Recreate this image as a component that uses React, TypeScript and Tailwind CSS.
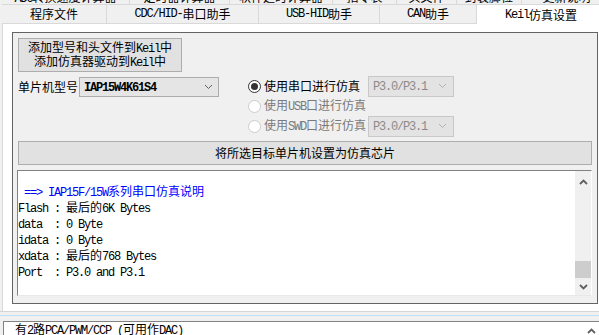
import React from "react";

function T({ s }: { s: string }) {
  const parts = s.split(/([\x20-\x7e]+)/).filter((p) => p.length > 0);
  return (
    <>
      {parts.map((p, i) =>
        /^[\x20-\x7e]+$/.test(p) ? (
          <span key={i} className="font-['Liberation_Mono',monospace] tracking-[-1.2px] whitespace-pre">
            {p}
          </span>
        ) : (
          <span key={i}>{p}</span>
        )
      )}
    </>
  );
}

function Chevron({ color = "#606060" }: { color?: string }) {
  return (
    <svg width="9" height="6" viewBox="0 0 9 6">
      <polyline points="1,1 4.5,4.5 8,1" fill="none" stroke={color} strokeWidth="1" />
    </svg>
  );
}

function ScrollArrow({ up }: { up?: boolean }) {
  return (
    <svg width="9" height="6" viewBox="0 0 9 6">
      <polyline
        points={up ? "1,5 4.5,1.5 8,5" : "1,1 4.5,4.5 8,1"}
        fill="none"
        stroke="#606060"
        strokeWidth="1.8"
      />
    </svg>
  );
}

function Radio({ checked, disabled }: { checked?: boolean; disabled?: boolean }) {
  return (
    <div
      className={
        "w-[13px] h-[13px] rounded-full border flex items-center justify-center bg-white shrink-0 " +
        (disabled ? "border-[#cccccc]" : "border-[#333333]")
      }
    >
      {checked ? <div className="w-[7px] h-[7px] rounded-full bg-[#333333]" /> : null}
    </div>
  );
}

function DisabledSelect() {
  return (
    <div className="w-[86px] h-[21px] bg-[#e3e3e3] border border-[#c8c8c8] flex items-center justify-between pl-[4px] pr-[6px] text-[#8a8a8a]">
      <span>
        <T s="P3.0/P3.1" />
      </span>
      <Chevron color="#b0b0b0" />
    </div>
  );
}

export default function App() {
  const row1 = [
    { w: 128, t: "ADC转换速度计算器" },
    { w: 100, t: "定时器计算器" },
    { w: 103, t: "软件延时计算器" },
    { w: 64, t: "指令表" },
    { w: 60, t: "头文件" },
    { w: 65, t: "封装脚位" },
    { w: 90, t: "更新说明" },
  ];
  const row2 = [
    { w: 105, t: "程序文件" },
    { w: 152, t: "CDC/HID-串口助手" },
    { w: 121, t: "USB-HID助手" },
    { w: 97, t: "CAN助手" },
  ];
  const lines: { s: string; blue?: boolean }[] = [
    { s: "" },
    { s: " ==> IAP15F/15W系列串口仿真说明", blue: true },
    { s: "Flash : 最后的6K Bytes" },
    { s: "data  : 0 Byte" },
    { s: "idata : 0 Byte" },
    { s: "xdata : 最后的768 Bytes" },
    { s: "Port  : P3.0 and P3.1" },
    { s: "" },
  ];
  return (
    <div className="w-[599px] h-[335px] overflow-hidden bg-[#f0f0f0] flex flex-col text-[12px] leading-[14px] text-black font-['Noto_Sans_CJK_SC',sans-serif]">
      {/* tab row 1 (cut off) */}
      <div className="h-[5px] flex pl-[2px] overflow-hidden shrink-0">
        {row1.map((t, i) => (
          <div
            key={i}
            style={{ width: t.w }}
            className="h-[5px] shrink-0 border-r border-b border-[#d9d9d9] flex justify-center overflow-hidden"
          >
            <div className="mt-[-10px] leading-[14px] whitespace-nowrap">
              <T s={t.t} />
            </div>
          </div>
        ))}
      </div>
      {/* tab row 2 */}
      <div className="h-[19px] flex pl-[2px] shrink-0">
        {row2.map((t, i) => (
          <div
            key={i}
            style={{ width: t.w }}
            className="h-[19px] shrink-0 border-r border-b border-[#d9d9d9] flex items-center justify-center whitespace-nowrap"
          >
            <T s={t.t} />
          </div>
        ))}
        <div className="w-[128px] h-[19px] shrink-0 bg-white flex items-center justify-center whitespace-nowrap">
          <T s="Keil仿真设置" />
        </div>
      </div>
      {/* tab page */}
      <div className="h-[287px] shrink-0 ml-[2px] border-l border-[#d9d9d9] bg-white pl-[9px] pt-[8px]">
        <div className="w-[586px] h-[272px] border border-[#646464] bg-[#f0f0f0] pl-[5px] pt-[5px] flex flex-col">
          <div className="flex">
            <div className="w-[230px] shrink-0 flex flex-col">
              <div className="w-[164px] h-[34px] bg-[#e1e1e1] border border-[#adadad] flex flex-col items-center justify-center leading-[12px]">
                <div className="whitespace-nowrap">
                  <T s="添加型号和头文件到Keil中" />
                </div>
                <div className="whitespace-nowrap">
                  <T s="添加仿真器驱动到Keil中" />
                </div>
              </div>
              <div className="mt-[5px] flex items-center h-[20px]">
                <span className="w-[61px] shrink-0 whitespace-nowrap">单片机型号</span>
                <div className="w-[140px] h-[20px] bg-[#e5e5e5] border border-[#acacac] flex items-center justify-between pl-[4px] pr-[5px] font-bold">
                  <span>
                    <T s="IAP15W4K61S4" />
                  </span>
                  <Chevron />
                </div>
              </div>
            </div>
            <div className="mt-[38px] flex flex-col">
              <div className="h-[20px] flex items-center">
                <Radio checked />
                <div className="w-[104px] ml-[3px] whitespace-nowrap">使用串口进行仿真</div>
                <DisabledSelect />
              </div>
              <div className="h-[20px] flex items-center text-[#7a7a7a]">
                <Radio disabled />
                <div className="w-[104px] ml-[3px] whitespace-nowrap">
                  <T s="使用USB口进行仿真" />
                </div>
              </div>
              <div className="h-[20px] flex items-center text-[#7a7a7a]">
                <Radio disabled />
                <div className="w-[104px] ml-[3px] whitespace-nowrap">
                  <T s="使用SWD口进行仿真" />
                </div>
                <DisabledSelect />
              </div>
            </div>
          </div>
          <div className="mt-[5px] w-[574px] h-[24px] bg-[#e1e1e1] border border-[#adadad] flex items-center justify-center">
            将所选目标单片机设置为仿真芯片
          </div>
          <div className="mt-[5px] ml-[-1px] w-[575px] h-[126px] bg-white border-t border-l border-[#828282] border-r border-b border-r-white border-b-[#e8e8e8] flex overflow-hidden">
            <div className="flex-1 overflow-hidden pl-[0px]">
              <div className="mt-[-4px]">
                {lines.map((l, i) => (
                  <div
                    key={i}
                    className={"h-[16px] leading-[16px] whitespace-pre " + (l.blue ? "text-[#0000ff]" : "text-black")}
                  >
                    <T s={l.s} />
                  </div>
                ))}
              </div>
            </div>
            <div className="w-[16px] h-full bg-[#f0f0f0] flex flex-col items-center">
              <div className="h-[17px] flex items-center justify-center mt-[2px]">
                <ScrollArrow up />
              </div>
              <div className="flex-1" />
              <div className="w-[16px] h-[17px] bg-[#cdcdcd]" />
              <div className="h-[17px] flex items-center justify-center">
                <ScrollArrow />
              </div>
            </div>
          </div>
        </div>
      </div>
      {/* splitter */}
      <div className="h-[10px] shrink-0 flex flex-col">
        <div className="h-[1px] bg-[#d4d4d4]" />
        <div className="h-[3px] bg-[#f0f0f0]" />
        <div className="h-[1px] bg-[#bfe0f8]" />
        <div className="h-[5px] bg-[#f0f0f0]" />
      </div>
      {/* bottom memo */}
      <div className="flex-1 ml-[3px] border-t border-l border-[#828282] bg-white flex justify-between">
        <div className="pl-[11px] pt-[0px] leading-[14px] whitespace-pre">
          <T s="有2路PCA/PWM/CCP (可用作DAC)" />
        </div>
        <div className="w-[12px] flex justify-start pt-[6px]">
          <ScrollArrow up />
        </div>
      </div>
    </div>
  );
}
